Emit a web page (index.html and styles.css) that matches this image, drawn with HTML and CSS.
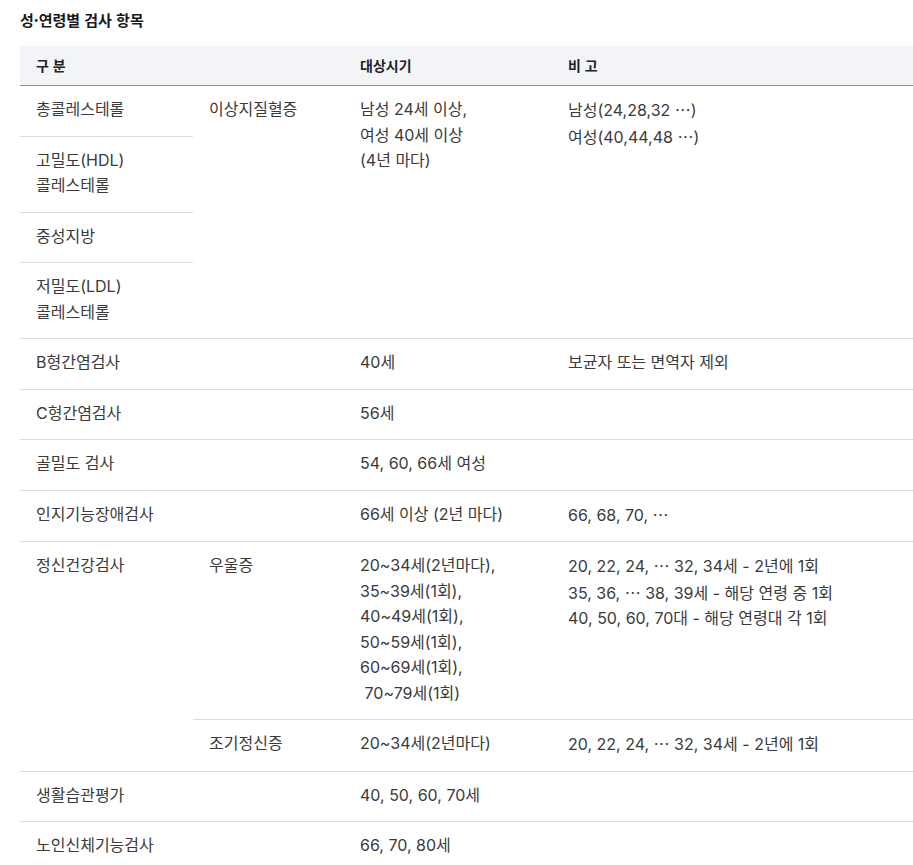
FILE: index.html
```html
<!DOCTYPE html>
<html lang="ko">
<head>
<meta charset="utf-8">
<title>성·연령별 검사 항목</title>
<link rel="stylesheet" href="styles.css">
</head>
<body>
<section class="section">
  <h2 class="title">성·연령별 검사 항목</h2>
  <table class="tbl">
    <colgroup>
      <col class="c1"><col class="c2"><col class="c3"><col class="c4">
    </colgroup>
    <thead>
      <tr><th colspan="2">구 분</th><th>대상시기</th><th>비 고</th></tr>
    </thead>
    <tbody>
      <tr>
        <td class="sub">총콜레스테롤</td>
        <td rowspan="4">이상지질혈증</td>
        <td rowspan="4">남성 24세 이상,<br>여성 40세 이상<br>(4년 마다)</td>
        <td rowspan="4">남성(24,28,32 <span class="ell">…</span>)<br>여성(40,44,48 <span class="ell">…</span>)</td>
      </tr>
      <tr><td class="sub">고밀도(HDL)<br>콜레스테롤</td></tr>
      <tr><td class="sub">중성지방</td></tr>
      <tr><td>저밀도(LDL)<br>콜레스테롤</td></tr>
      <tr><td>B형간염검사</td><td></td><td>40세</td><td>보균자 또는 면역자 제외</td></tr>
      <tr><td>C형간염검사</td><td></td><td>56세</td><td></td></tr>
      <tr><td>골밀도 검사</td><td></td><td>54, 60, 66세 여성</td><td></td></tr>
      <tr><td>인지기능장애검사</td><td></td><td>66세 이상 (2년 마다)</td><td>66, 68, 70, <span class="ell">…</span></td></tr>
      <tr>
        <td rowspan="2">정신건강검사</td>
        <td>우울증</td>
        <td>20~34세(2년마다),<br>35~39세(1회),<br>40~49세(1회),<br>50~59세(1회),<br>60~69세(1회),<br>&nbsp;70~79세(1회)</td>
        <td>20, 22, 24, <span class="ell">…</span> 32, 34세 - 2년에 1회<br>35, 36, <span class="ell">…</span> 38, 39세 - 해당 연령 중 1회<br>40, 50, 60, 70대 - 해당 연령대 각 1회</td>
      </tr>
      <tr><td>조기정신증</td><td>20~34세(2년마다)</td><td>20, 22, 24, <span class="ell">…</span> 32, 34세 - 2년에 1회</td></tr>
      <tr><td>생활습관평가</td><td></td><td>40, 50, 60, 70세</td><td></td></tr>
      <tr><td>노인신체기능검사</td><td></td><td>66, 70, 80세</td><td></td></tr>
    </tbody>
  </table>
</section>
</body>
</html>
```

FILE: styles.css
```css
html, body {
  margin: 0;
  padding: 0;
  background: #fff;
}
body {
  font-family: "Noto Sans CJK KR", "Noto Sans", sans-serif;
  color: #3a3a3a;
  overflow: hidden;
}
.section {
  padding: 8px 0 0 20px;
}
.title {
  margin: 0 0 14px;
  font-size: 15px;
  line-height: 24px;
  font-weight: 700;
  color: #1a1a1a;
}
.tbl {
  width: 893px;
  border-collapse: collapse;
  table-layout: fixed;
  font-family: "Inter", "Noto Sans CJK KR", sans-serif;
  font-size: 16px;
  line-height: 25.5px;
}
.ell {
  font-family: "Noto Sans CJK KR", sans-serif;
}
.c1 { width: 173px; }
.c2 { width: 151px; }
.c3 { width: 208px; }
.c4 { width: 361px; }
.tbl th {
  background: #f3f4f8;
  text-align: left;
  font-family: "Noto Sans CJK KR", sans-serif;
  font-size: 14px;
  font-weight: 700;
  color: #222;
  padding: 7px 16px 7px 16px;
  line-height: 25px;
  border-bottom: 1px solid #8f919e;
}
.tbl td {
  vertical-align: top;
  padding: 11px 16px 13px;
  border-bottom: 1px solid #dcdcdc;
  white-space: nowrap;
}
```
